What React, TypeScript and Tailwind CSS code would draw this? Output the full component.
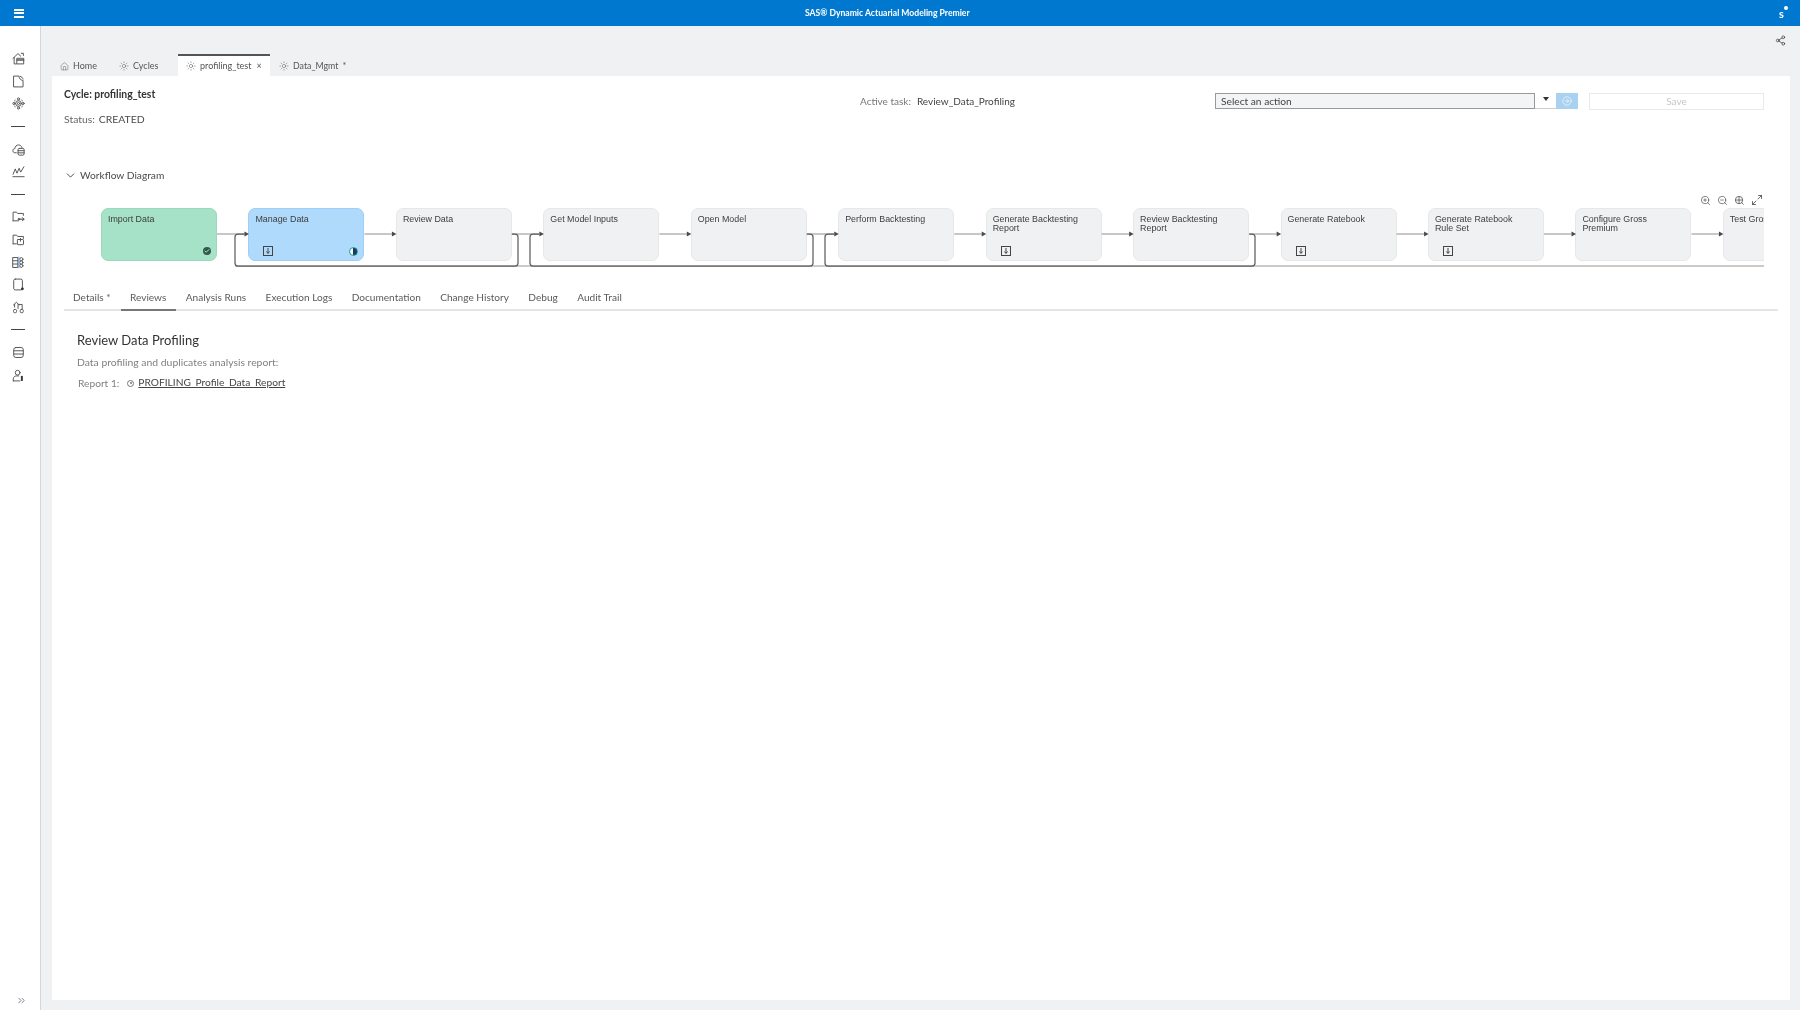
import React from "react";
import { House, ChevronDown, ChevronsRight, Share2, ZoomIn, ZoomOut, Sun, Check, CircleArrowRight, Maximize2 } from "lucide-react";

function Ic({ children }: { children: React.ReactNode }) {
  return (
    <svg width="13" height="13" viewBox="0 0 12 12" fill="none" stroke="#555" strokeWidth="0.9" strokeLinejoin="round" strokeLinecap="round">
      {children}
    </svg>
  );
}

const sideGroups: React.ReactNode[][] = [
  [
    <Ic><path d="M0.8 6 5.5 1.5 8 3.8M2 5v6h2" /><rect x="4.8" y="5.8" width="6" height="5.2" /><path d="M4.8 7.4h6" strokeWidth="1.4" /><path d="M8.5 1.2h2v2" /></Ic>,
    <Ic><path d="M1.8 1H6.4C6.6 3.4 8 4.8 10.2 5V11H1.8Z" /><path d="M7.6 1.2C8.8 1.6 9.8 2.4 10.2 3.6" /></Ic>,
    <Ic><circle cx="6" cy="6" r="2.6" /><circle cx="6" cy="6" r="1" /><circle cx="6" cy="1.8" r="1" /><circle cx="6" cy="10.2" r="1" /><circle cx="1.8" cy="6" r="1" /><circle cx="10.2" cy="6" r="1" /><path d="M3 3 2.3 3.6M9 3l.7.6M3 9l-.7-.6M9 9l.7-.6" /></Ic>,
  ],
  [
    <Ic><path d="M4 9H2.6C1.4 9 .8 8 .8 7 .8 5.9 1.6 5.2 2.6 5.2 2.8 3.2 4.2 1.8 6 1.8 7.6 1.8 8.8 2.8 9.2 4.2" /><rect x="5.6" y="5" width="5.6" height="6.2" rx="1.2" /><path d="M5.6 7.1h5.6M5.6 9.1h5.6" /></Ic>,
    <Ic><path d="M1 8.6 3 3.6 4.6 7.6 6.6 3 8 6.6 11 1.6" /><path d="M.8 10.8h10.4" /></Ic>,
  ],
  [
    <Ic><path d="M1 10V2h3.2l1 1.2H10.5V5M6 10H1" /><path d="M6 8.5h5M9.6 7 11 8.5 9.6 10" stroke="#345" /><circle cx="6.4" cy="8.5" r=".8" /></Ic>,
    <Ic><path d="M1 10V2h3.2l1 1.2H10.5V5M4 10H1" /><rect x="5" y="6" width="5.6" height="4.8" rx=".6" /><path d="M7.8 5v2.6" /></Ic>,
    <Ic><rect x="1" y="1.4" width="4.4" height="9.2" /><path d="M1 4.4h4.4M1 7.4h4.4" /><circle cx="8.6" cy="3" r="1.5" /><circle cx="8.6" cy="6" r="1.5" /><circle cx="8.6" cy="9" r="1.5" /><path d="M6.4 1v10" stroke="#6aa7d8" /></Ic>,
    <Ic><rect x="1.6" y="1" width="8" height="10" rx="1.4" /><circle cx="9.6" cy="10" r="1.3" fill="#333" stroke="none" /></Ic>,
    <Ic><path d="M1.4 3.6 4 1.2 6.6 3.6M2.4 3.2V5.6M5.6 3.2V7M6.6 3.2H9.4V7" /><rect x="1.4" y="7.8" width="2.8" height="3" rx="1" /><rect x="7.6" y="7.8" width="2.8" height="3" rx="1" /></Ic>,
  ],
  [
    <Ic><rect x="1.6" y="1.4" width="8.8" height="9.2" rx="2" /><path d="M1.6 4.4h8.8M1.6 7.4h8.8" /></Ic>,
    <Ic><circle cx="5.2" cy="3.4" r="2.2" /><path d="M1.2 11V9c0-1.6 1.4-2.6 3-2.6h2" /><path d="M1.2 11h6" /><rect x="8.2" y="6.4" width="1.8" height="4.6" fill="#334" stroke="none" /></Ic>,
  ],
];

function InfoBox() {
  return (
    <svg width="10" height="10" viewBox="0 0 10 10" fill="none" stroke="#444" strokeWidth="1">
      <rect x="0.5" y="0.5" width="9" height="9" />
      <path d="M5 2v5M3.5 5.5 5 7.5l1.5-2" />
    </svg>
  );
}

type NodeT = { t: string[]; kind?: "g" | "b"; box?: boolean };
const nodes: NodeT[] = [
  { t: ["Import Data"], kind: "g" },
  { t: ["Manage Data"], kind: "b", box: true },
  { t: ["Review Data"] },
  { t: ["Get Model Inputs"] },
  { t: ["Open Model"] },
  { t: ["Perform Backtesting"] },
  { t: ["Generate Backtesting", "Report"], box: true },
  { t: ["Review Backtesting", "Report"] },
  { t: ["Generate Ratebook"], box: true },
  { t: ["Generate Ratebook", "Rule Set"], box: true },
  { t: ["Configure Gross", "Premium"] },
  { t: ["Test Gross Premium"] },
];

function Node({ n }: { n: NodeT }) {
  const color =
    n.kind === "g"
      ? "bg-[#a6e2c8] border-[#9bd8bd]"
      : n.kind === "b"
      ? "bg-[#b0dafc] border-[#9dcff8]"
      : "bg-[#f0f1f3] border-[#e6e7e9]";
  return (
    <div className={`relative w-[116px] h-[53px] shrink-0 rounded-[7px] border pl-[6px] pt-[5.5px] font-['Liberation_Sans',sans-serif] text-[8.9px] leading-[9.7px] text-[#3d3d3d] ${color}`}>
      {n.t.map((l) => (
        <div key={l} className="whitespace-nowrap">{l}</div>
      ))}
      {n.box && (
        <div className="absolute left-[14px] bottom-[4px]">
          <InfoBox />
        </div>
      )}
      {n.kind === "g" && (
        <div className="absolute right-[5px] bottom-[5px] w-[8px] h-[8px] rounded-full bg-[#2f5b4b] flex items-center justify-center">
          <Check size={6} strokeWidth={3} color="#ffffff" />
        </div>
      )}
      {n.kind === "b" && (
        <div className="absolute right-[5px] bottom-[4.5px] w-[9px] h-[9px] rounded-full border border-[#1d9ea4] bg-[linear-gradient(90deg,#ffffff_50%,#1f3b57_50%)]" />
      )}
    </div>
  );
}

const X0 = 101;
const STEP = 147.45;
const left = (i: number) => X0 + STEP * i;

function Connectors() {
  const Y = 234;
  const B = 266;
  return (
    <svg className="absolute inset-0 pointer-events-none" width="1663" height="62" viewBox="101 208 1663 62" fill="none">
      <path d={`M235 ${B}H1764`} stroke="#b9b9b9" strokeWidth="1.5" />
      {nodes.slice(0, -1).map((_, i) => (
        <g key={i}>
          <path d={`M${left(i) + 116} ${Y}H${left(i + 1) - 4}`} stroke="#8f8f8f" strokeWidth="1" />
          <path d={`M${left(i + 1) - 4} ${Y - 2.5}L${left(i + 1) + 0.5} ${Y}L${left(i + 1) - 4} ${Y + 2.5}Z`} fill="#4a4a4a" />
        </g>
      ))}
      <g stroke="#5f5f5f" strokeWidth="1.25">
        <path d={`M${left(1) - 4} ${Y}H238Q235 ${Y} 235 ${Y + 3}V${B - 3}Q235 ${B} 238 ${B}H515Q518 ${B} 518 ${B - 3}V${Y + 3}Q518 ${Y} 515 ${Y}H${left(2) + 116}`} />
        <path d={`M${left(3) - 4} ${Y}H533Q530 ${Y} 530 ${Y + 3}V${B - 3}Q530 ${B} 533 ${B}H810Q813 ${B} 813 ${B - 3}V${Y + 3}Q813 ${Y} 810 ${Y}H${left(4) + 116}`} />
        <path d={`M${left(5) - 4} ${Y}H828Q825 ${Y} 825 ${Y + 3}V${B - 3}Q825 ${B} 828 ${B}H1252Q1255 ${B} 1255 ${B - 3}V${Y + 3}Q1255 ${Y} 1252 ${Y}H${left(7) + 116}`} />
      </g>
    </svg>
  );
}

const subTabs = ["Details *", "Reviews", "Analysis Runs", "Execution Logs", "Documentation", "Change History", "Debug", "Audit Trail"];

export default function App() {
  return (
    <div className="w-[1800px] h-[1010px] flex flex-col overflow-hidden bg-[#f0f1f3] font-['Lato',sans-serif] text-[#4a4a4a] blur-[0.35px]">
      <header className="h-[26px] shrink-0 bg-[#0078cf] flex items-center justify-between relative px-[14px] text-white">
        <div className="flex flex-col gap-[1.5px] w-[10px]">
          <span className="h-[2px] bg-white" />
          <span className="h-[2px] bg-white" />
          <span className="h-[2px] bg-white" />
        </div>
        <div className="absolute left-[805px] w-[164px] text-center text-[8.6px] font-bold whitespace-nowrap">
          SAS® Dynamic Actuarial Modeling Premier
        </div>
        <div className="relative w-[14px] h-[16px] text-[11px] font-bold leading-[18px] pl-[5px] -mr-[2px]">
          s
          <span className="absolute right-0 top-[1px] w-[4px] h-[4px] rounded-full bg-white" />
        </div>
      </header>

      <div className="flex flex-1 min-h-0">
        <aside className="w-[41px] shrink-0 bg-white border-r border-[#d4d6d9] flex flex-col items-center pt-[21.5px] pb-[4px] pr-[4px]">
          {sideGroups.map((g, gi) => (
            <React.Fragment key={gi}>
              {gi > 0 && (
                <div className="h-[22.6px] flex items-center">
                  <span className="block w-[14px] h-px bg-[#444]" />
                </div>
              )}
              {g.map((icon, i) => (
                <div key={i} className="h-[22.6px] flex items-center justify-center">
                  {icon}
                </div>
              ))}
            </React.Fragment>
          ))}
          <div className="mt-auto pl-[7px]">
            <ChevronsRight size={11} color="#6b7a8c" />
          </div>
        </aside>

        <main className="flex-1 min-w-0 flex flex-col pb-[10px]">
          <div className="h-[28px] flex justify-end items-start pt-[9px] pr-[14px]">
            <Share2 size={11} strokeWidth={1.5} color="#333" />
          </div>
          <nav className="h-[22px] shrink-0 flex items-end pl-[19px] text-[9px] text-[#555]">
            <div className="flex items-center gap-[4px] h-[20px] w-[59px]">
              <House size={9} strokeWidth={1.2} /> Home
            </div>
            <div className="flex items-center gap-[4px] h-[20px] w-[59px]">
              <Sun size={10} strokeWidth={1.2} /> Cycles
            </div>
            <div className="flex items-center gap-[4px] h-[22px] w-[92px] bg-white border-t-2 border-[#555] pl-[8px]">
              <Sun size={10} strokeWidth={1.2} /> profiling_test <span className="ml-[1px]">×</span>
            </div>
            <div className="flex items-center gap-[4px] h-[20px] pl-[9px]">
              <Sun size={10} strokeWidth={1.2} /> <span className="text-[8.8px]">Data_Mgmt</span> <span>*</span>
            </div>
          </nav>

          <section className="ml-[11px] mr-[10px] flex-1 bg-white flex flex-col">
            <div className="relative h-[88px] pl-[12px] pt-[11px] text-[10.4px]">
              <div className="font-bold text-[#333] leading-[14px]">Cycle: profiling_test</div>
              <div className="mt-[11px] leading-[14px]">
                <span className="text-[#666]">Status:</span>
                <span className="ml-[4px]">CREATED</span>
              </div>
              <div className="absolute left-[808px] top-[18px] leading-[14px] text-[10px]">
                <span className="text-[#777]">Active task:</span>
                <span className="ml-[6px] text-[#444]">Review_Data_Profiling</span>
              </div>
              <div className="absolute left-[1163px] top-[17px] flex items-stretch h-[16px]">
                <div className="w-[320px] border-[1.5px] border-[#9a9a9a] bg-[#f3f4f6] pl-[5px] text-[10.2px] leading-[14px] text-[#444]">
                  Select an action
                </div>
                <div className="w-[21px] bg-white border-b border-[#cfcfcf] flex justify-center pt-[3.5px]">
                  <span className="block w-0 h-0 border-x-[3px] border-x-transparent border-t-[4px] border-t-[#333]" />
                </div>
                <div className="w-[22px] bg-[#a8d2f0] flex items-center justify-center">
                  <CircleArrowRight size={10} color="#ffffff" strokeWidth={1.5} />
                </div>
              </div>
              <div className="absolute left-[1537px] top-[17px] w-[175px] h-[17px] border border-[#e8e9eb] text-center text-[10px] leading-[15px] text-[#c4c6c9]">
                Save
              </div>
            </div>

            <div className="relative pl-[12px] h-[44px] flex items-start text-[10.2px]">
              <div className="flex items-center gap-[3px] mt-[4px] leading-[14px]">
                <ChevronDown size={13} strokeWidth={1.6} color="#333" />
                <span>Workflow Diagram</span>
              </div>
              <div className="absolute top-[30px] right-[27px] flex items-center gap-[6px] text-[#444]">
                <ZoomIn size={11} strokeWidth={1.4} />
                <ZoomOut size={11} strokeWidth={1.4} />
                <svg width="11" height="11" viewBox="0 0 24 24" fill="none" stroke="currentColor" strokeWidth="1.6">
                  <circle cx="11" cy="11" r="8" />
                  <path d="m21 21-4.3-4.3M11 3v16M3 11h16" />
                </svg>
                <Maximize2 size={12} strokeWidth={1.6} />
              </div>
            </div>

            <div className="relative ml-[49px] mr-[26px] h-[62px] overflow-hidden flex gap-[31.45px]">
              {nodes.map((n) => (
                <Node key={n.t.join()} n={n} />
              ))}
              <Connectors />
            </div>

            <div className="ml-[12px] mr-[12px] h-[41px] flex items-end gap-[19.4px] border-b-2 border-[#e4e5e7] pl-[9px] text-[10.1px] text-[#5a5a5a]">
              {subTabs.map((t) => (
                <div key={t} className={`relative h-[19px] whitespace-nowrap ${t === "Reviews" ? "after:absolute after:-left-[9px] after:-right-[10px] after:bottom-[-2px] after:h-[2px] after:bg-[#777]" : ""}`}>
                  {t}
                </div>
              ))}
            </div>

            <div className="pl-[25px] pt-[21px]">
              <h2 className="text-[13px] leading-[16px] text-[#333]">Review Data Profiling</h2>
              <p className="mt-[7px] text-[10.4px] leading-[14px] text-[#808080]">Data profiling and duplicates analysis report:</p>
              <div className="mt-[7px] flex items-center text-[10.2px] leading-[14px] text-[#808080] pl-[1px]">
                <span>Report 1:</span>
                <span className="ml-[8px] w-[7px] h-[7px] rounded-full border border-[#777] flex items-center justify-center">
                  <span className="block w-[2px] h-[2px] rounded-full bg-[#777]" />
                </span>
                <a className="ml-[4px] -mt-[2px] text-[#444] underline">PROFILING_Profile_Data_Report</a>
              </div>
            </div>
          </section>
        </main>
      </div>
    </div>
  );
}
